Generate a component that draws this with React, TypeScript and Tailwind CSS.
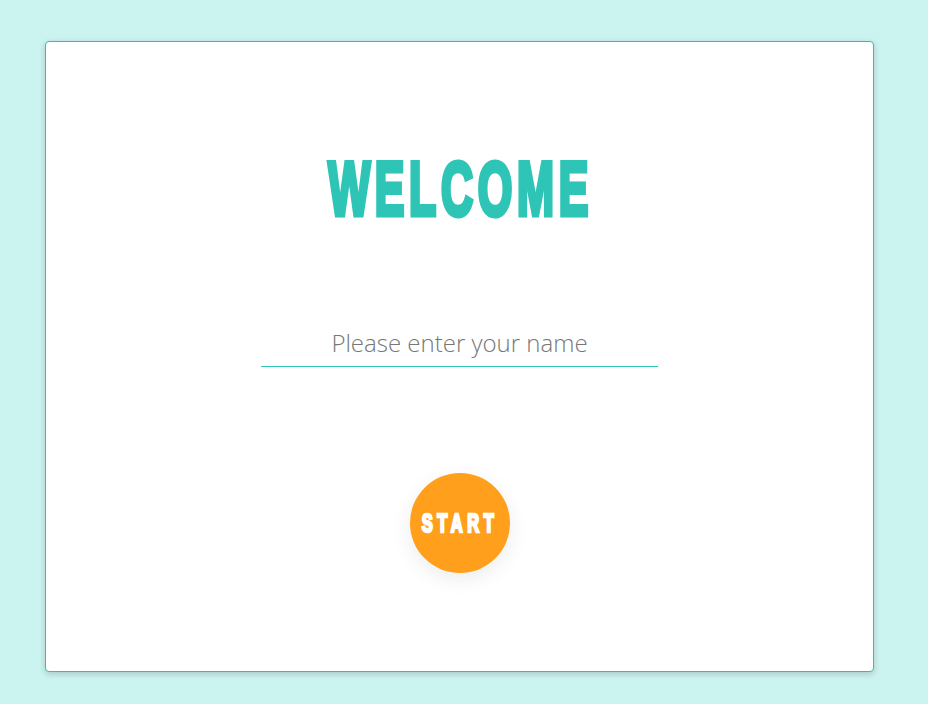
import React from "react";

export default function App() {
  return (
    <div className="w-[928px] h-[704px] bg-[#cbf3f0] pt-[41px] pl-[45px] overflow-hidden">
      <div className="w-[829px] h-[631px] bg-white border border-solid border-[#3bbab0] rounded-[4px] shadow-[0_2px_6px_rgba(0,0,0,0.18)] flex flex-col items-center">
        <div className="mt-[106px] h-[82px] flex items-center justify-center">
          <h1
            className="text-[76px] leading-none font-bold text-[#2ec4b6] tracking-[8px] pl-[4px] [transform:scaleX(0.585)] [-webkit-text-stroke:5px_#2ec4b6] whitespace-nowrap"
            style={{ fontFamily: '"Liberation Sans", Arial, sans-serif' }}
          >
            WELCOME
          </h1>
        </div>
        <div className="mt-[96px] w-[397px] h-[41px] border-0 border-b border-solid border-b-[#2ec4b6] flex items-start">
          <input
            className="w-full h-[33px] text-center text-[24px] font-light text-[#555] placeholder:text-[#777] outline-none bg-transparent border-0"
            style={{ fontFamily: '"Open Sans", sans-serif' }}
            placeholder="Please enter your name"
          />
        </div>
        <button className="mt-[106px] w-[100px] h-[100px] rounded-full bg-[#ff9f1c] shadow-[0_6px_20px_rgba(0,0,0,0.08)] flex items-center justify-center text-white">
          <span
            className="text-[25px] leading-none font-bold tracking-[7px] pl-[1px] [transform:scaleX(0.66)] [-webkit-text-stroke:2.5px_#ffffff] whitespace-nowrap"
            style={{ fontFamily: '"Liberation Sans", Arial, sans-serif' }}
          >
            START
          </span>
        </button>
      </div>
    </div>
  );
}
